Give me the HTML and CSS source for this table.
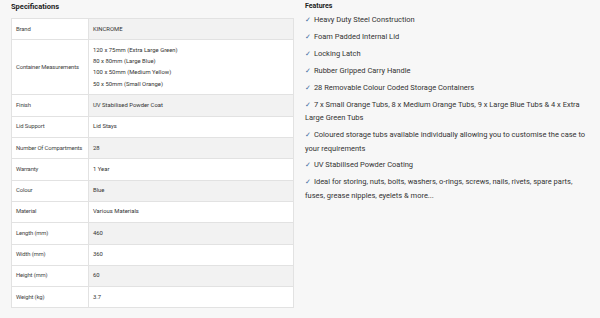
FILE: index.html
```html
<!DOCTYPE html>
<html lang="en">
<head>
    <meta charset="UTF-8">
    <title>Product Details</title>
    <link rel="stylesheet" href="styles.css">
</head>
<body>
    <main class="details">
        <section class="specs">
            <h2>Specifications</h2>
            <table class="spec-table">
                <tbody>
                    <tr><th>Brand</th><td>KINCROME</td></tr>
                    <tr>
                        <th>Container Measurements</th>
                        <td>
                            120 x 75mm (Extra Large Green)<br>
                            80 x 80mm (Large Blue)<br>
                            100 x 50mm (Medium Yellow)<br>
                            50 x 50mm (Small Orange)
                        </td>
                    </tr>
                    <tr><th>Finish</th><td>UV Stabilised Powder Coat</td></tr>
                    <tr><th>Lid Support</th><td>Lid Stays</td></tr>
                    <tr><th>Number Of Compartments</th><td>28</td></tr>
                    <tr><th>Warranty</th><td>1 Year</td></tr>
                    <tr><th>Colour</th><td>Blue</td></tr>
                    <tr><th>Material</th><td>Various Materials</td></tr>
                    <tr><th>Length (mm)</th><td>460</td></tr>
                    <tr><th>Width (mm)</th><td>360</td></tr>
                    <tr><th>Height (mm)</th><td>60</td></tr>
                    <tr><th>Weight (kg)</th><td>3.7</td></tr>
                </tbody>
            </table>
        </section>
        <section class="features">
            <h2>Features</h2>
            <ul>
                <li>Heavy Duty Steel Construction</li>
                <li>Foam Padded Internal Lid</li>
                <li>Locking Latch</li>
                <li>Rubber Gripped Carry Handle</li>
                <li>28 Removable Colour Coded Storage Containers</li>
                <li>7 x Small Orange Tubs, 8 x Medium Orange Tubs, 9 x Large Blue Tubs &amp; 4 x Extra Large Green Tubs</li>
                <li>Coloured storage tubs available individually allowing you to customise the case to your requirements</li>
                <li>UV Stabilised Powder Coating</li>
                <li>Ideal for storing, nuts, bolts, washers, o-rings, screws, nails, rivets, spare parts, fuses, grease nipples, eyelets &amp; more...</li>
            </ul>
        </section>
    </main>
</body>
</html>
```

FILE: styles.css
```css
body {
    margin: 0;
    padding: 0;
    background-color: #f7f7f7;
    font-family: Roboto, "Liberation Sans", sans-serif;
    color: #333;
}
.details {
    display: grid;
    grid-template-columns: 283px 1fr;
    column-gap: 11px;
    padding: 0 10px 0 11px;
}
h2 {
    margin: 0;
    font-weight: bold;
    color: #222;
}
.specs h2 {
    font-size: 7.5px;
    line-height: 14px;
    margin-bottom: 4px;
}
.spec-table {
    width: 100%;
    table-layout: fixed;
    border-collapse: collapse;
    font-size: 5.9px;
    line-height: 11.3px;
    background: #fff;
    border: 1px solid #dcdcdc;
}
.spec-table th,
.spec-table td {
    border: 1px solid #e2e2e2;
    padding: 4.5px 4px;
    text-align: left;
    vertical-align: middle;
    font-weight: normal;
}
.spec-table th {
    width: 68px;
    white-space: nowrap;
    letter-spacing: -0.15px;
    background: #fff;
    color: #444;
}
.spec-table tr:nth-child(odd) td {
    background: #f2f2f2;
}
.features h2 {
    font-size: 7px;
    line-height: 12px;
    margin-bottom: 0;
}
.features ul {
    list-style: none;
    margin: 0;
    padding: 1px 0 0;
    font-size: 7.5px;
    line-height: 13.3px;
}
.features li {
    margin-bottom: 3.7px;
}
.features li::before {
    content: "\2713";
    font-family: "DejaVu Sans", sans-serif;
    font-weight: bold;
    color: #3d6b9e;
    font-size: 7px;
    line-height: 0;
    margin-right: 3px;
}
```
